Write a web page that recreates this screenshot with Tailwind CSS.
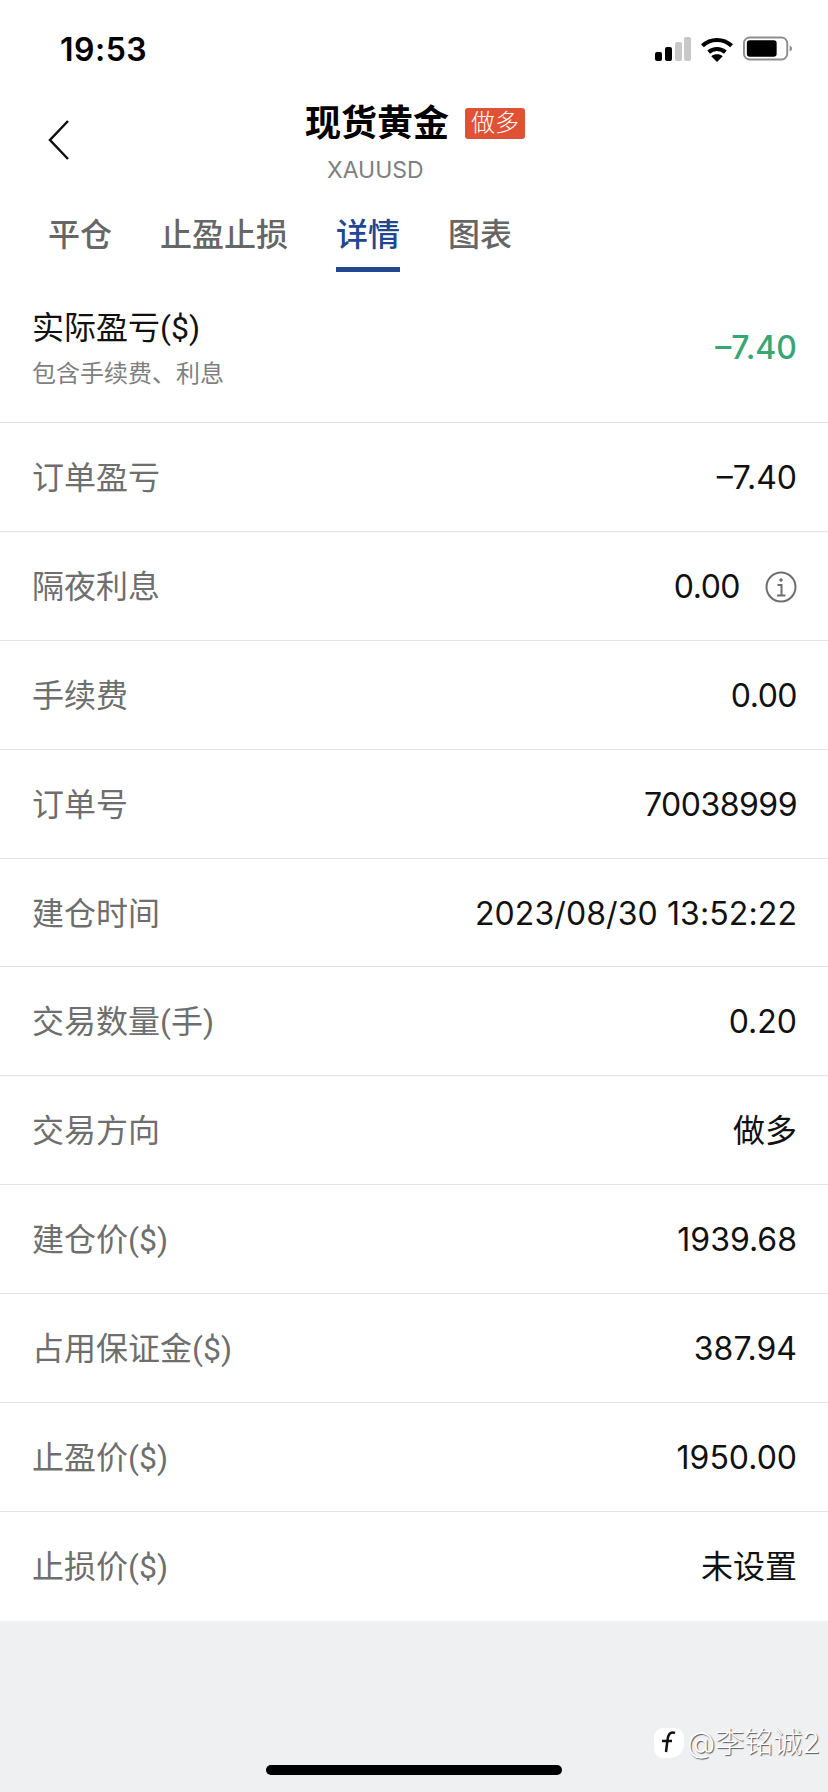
<!DOCTYPE html>
<html lang="zh">
<head>
    <meta charset="UTF-8">
    <meta name="viewport" content="width=device-width, initial-scale=1.0">
    <title>现货黄金</title>
    <script src="https://cdn.jsdelivr.net/npm/@tailwindcss/browser@4"></script>
</head>
<body class="bg-[#eff0f2] font-['Inter','Noto_Sans_CJK_SC',sans-serif]">
    <div class="relative w-[828px] h-[1792px] overflow-hidden">
        <div class="bg-white">
            <!-- status bar -->
            <div class="h-[98px] flex items-center justify-between pl-[60px] pr-[35px]">
                <span class="text-[32px] font-semibold text-black tracking-[0.5px] mt-[2px]">19:53</span>
                <div class="flex items-center gap-[9px]">
                    <svg width="37" height="24" viewBox="0 0 37 24">
                        <rect x="1" y="15" width="7" height="9" rx="2" fill="#000"/>
                        <rect x="11" y="10" width="7" height="14" rx="2" fill="#000"/>
                        <rect x="21" y="5" width="7" height="19" rx="2" fill="#c8c8c8"/>
                        <rect x="30" y="0" width="7" height="24" rx="2" fill="#c8c8c8"/>
                    </svg>
                    <svg width="34" height="25" viewBox="0 0 32 24" fill="none" stroke="#000" stroke-width="4">
                        <path d="M2 8.500C10 1 22 1 30 8.500"/>
                        <path d="M8 14.500C12.500 10.500 19.500 10.500 24 14.500"/>
                        <path d="M16 24L10.500 18.500C13.500 16 18.500 16 21.500 18.500Z" fill="#000" stroke="none"/>
                    </svg>
                    <svg width="50" height="26" viewBox="0 0 52 26">
                        <rect x="1" y="1" width="45" height="23" rx="6" fill="none" stroke="#8e8e8e" stroke-width="2"/>
                        <rect x="4" y="4" width="31" height="17" rx="3" fill="#000"/>
                        <path d="M48.500 9.500C50.500 10 51 11.500 51 12.500C51 13.500 50.500 15 48.500 15.500Z" fill="#8e8e8e"/>
                    </svg>
                </div>
            </div>

            <!-- nav -->
            <div class="relative h-[100px] pt-[3px]">
                <svg class="absolute left-[48px] top-[21px]" width="22" height="42" viewBox="0 0 22 42" fill="none" stroke="#111" stroke-width="2.500">
                    <path d="M20 2L2 21L20 40"/>
                </svg>
                <div class="flex items-center pl-[305px]">
                    <span class="text-[36px] font-bold leading-[44px] text-black">现货黄金</span>
                    <span class="ml-[16px] w-[60px] h-[31px] rounded-[3px] bg-[#e05236] text-white text-[24px] leading-[30px] text-center font-light">做多</span>
                </div>
                <div class="text-[23px] leading-[30px] text-[#7f7f7f] mt-[10px] pl-[327px]">XAUUSD</div>
            </div>

            <!-- tabs -->
            <div class="h-[74px] flex items-start pl-[48px] gap-[48px] text-[32px] font-medium text-[#666666]">
                <div class="leading-[40px] pt-[17px]">平仓</div>
                <div class="leading-[40px] pt-[17px]">止盈止损</div>
                <div class="leading-[40px] pt-[17px] text-[#23478f] relative h-[74px]">详情<span class="absolute left-0 right-0 bottom-0 h-[5px] bg-[#23478f]"></span></div>
                <div class="leading-[40px] pt-[17px]">图表</div>
            </div>

            <!-- total row -->
            <div class="h-[151px] flex items-center justify-between pl-[32px] pr-[31px] border-b border-[#e3e3e3]">
                <div class="mt-[2px]">
                    <div class="font-['Roboto','Noto_Sans_CJK_SC',sans-serif] text-[32px] leading-[44px] text-[#111]">实际盈亏($)</div>
                    <div class="text-[24px] leading-[32px] text-[#7f7f7f] mt-[8px]">包含手续费、利息</div>
                </div>
                <div class="text-[32px] font-medium text-[#37a574] mt-[2px]">–7.40</div>
            </div>

            <!-- detail rows -->
            <div class="grid grid-cols-1 auto-rows-[108.900px] text-[32px] text-[#6e6e6e] [&>div]:flex [&>div]:items-center [&>div]:justify-between [&>div]:pt-[2px] [&>div]:pl-[32px] [&>div]:pr-[31px] [&>div>span:first-child]:font-['Roboto','Noto_Sans_CJK_SC',sans-serif]">
                <div class="border-b border-[#e3e3e3]"><span>订单盈亏</span><span class="text-[#111]">–7.40</span></div>
                <div class="border-b border-[#e3e3e3]"><span>隔夜利息</span>
                    <div class="flex items-center gap-[25px]">
                        <span class="text-[#111] tracking-[-0.5px]">0.00</span>
                        <svg width="32" height="32" viewBox="0 0 32 32" fill="none" stroke="#6e6e6e" stroke-width="2">
                            <circle cx="16" cy="16" r="14.500"/>
                            <circle cx="16" cy="9" r="1.800" fill="#6e6e6e" stroke="none"/>
                            <path d="M12.500 14H16.500V24M12 24.500H20.500"/>
                        </svg>
                    </div>
                </div>
                <div class="border-b border-[#e3e3e3]"><span>手续费</span><span class="text-[#111] tracking-[-0.5px]">0.00</span></div>
                <div class="border-b border-[#e3e3e3]"><span>订单号</span><span class="text-[#111] tracking-[-0.5px]">70038999</span></div>
                <div class="border-b border-[#e3e3e3]"><span>建仓时间</span><span class="text-[#111] tracking-[0.1px]">2023/08/30 13:52:22</span></div>
                <div class="border-b border-[#e3e3e3]"><span>交易数量(手)</span><span class="text-[#111]">0.20</span></div>
                <div class="border-b border-[#e3e3e3]"><span>交易方向</span><span class="text-[#111]">做多</span></div>
                <div class="border-b border-[#e3e3e3]"><span>建仓价($)</span><span class="text-[#111]">1939.68</span></div>
                <div class="border-b border-[#e3e3e3]"><span>占用保证金($)</span><span class="text-[#111]">387.94</span></div>
                <div class="border-b border-[#e3e3e3]"><span>止盈价($)</span><span class="text-[#111]">1950.00</span></div>
                <div><span>止损价($)</span><span class="text-[#111]">未设置</span></div>
            </div>
        </div>

        <!-- watermark -->
        <div class="absolute left-[654px] top-[1727px] flex items-center gap-[3px]">
            <div class="w-[30px] h-[30px] rounded-[9px] rounded-br-[14px] bg-white flex items-center justify-center">
                <svg width="22" height="28" viewBox="0 0 22 28" fill="none" stroke="#111" stroke-width="2.500"><path d="M17 4C12 2 10 6 9.500 11L8 23M4 12H14"/></svg>
            </div>
            <span class="text-[29px] leading-[32px] font-light text-white [text-shadow:1px_1px_1px_#555]">@李铭诚2</span>
        </div>

        <!-- home indicator -->
        <div class="absolute left-[266px] top-[1765px] w-[296px] h-[10px] rounded-full bg-black"></div>
    </div>
</body>
</html>
